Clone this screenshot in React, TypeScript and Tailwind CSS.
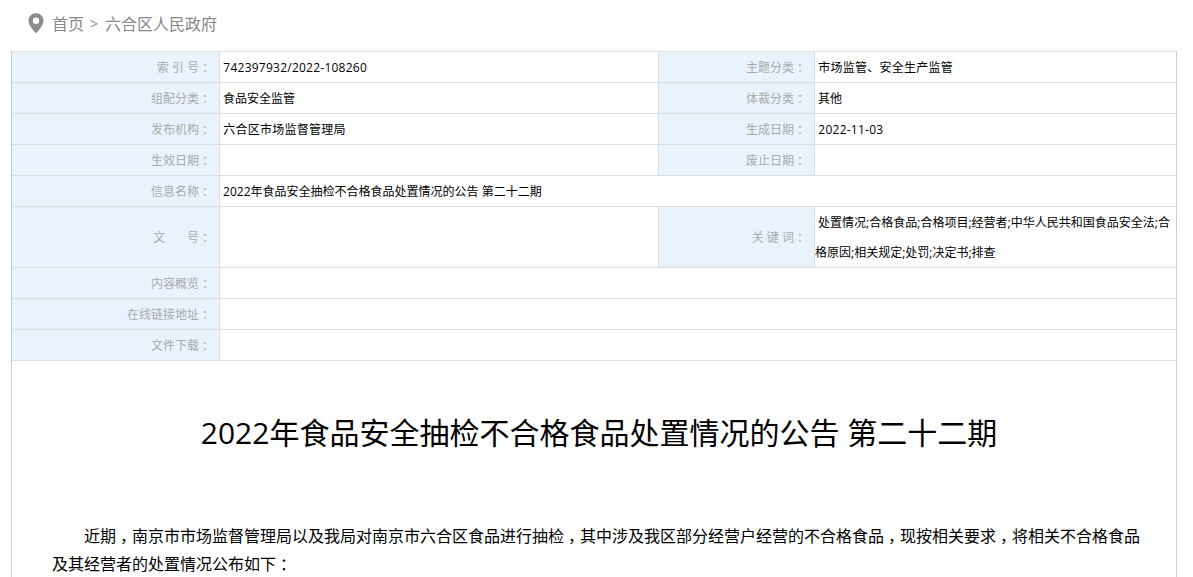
import { Fragment } from 'react'

const font = "font-['Open_Sans','Noto_Sans_CJK_SC',sans-serif]"

const labelCell = 'border-r border-b border-[#dddddd] bg-[#e8f3fd] pt-[2px] pr-[8px] text-right text-[#aaaaaa]'
const valueCell = 'border-b border-[#dddddd] pt-[2px] text-black'

// the reference font centres its full-width punctuation in the em box
function Punct({ text }: { text: string }) {
  return (
    <>
      {text.split(/(?<=[，：])|(?=[，：])/).map((part, i) =>
        part === '，' || part === '：' ? (
          <span key={i} className="inline-block w-[1em] text-center indent-0 [font-feature-settings:'halt']">{part}</span>
        ) : (
          <Fragment key={i}>{part}</Fragment>
        ),
      )}
    </>
  )
}

function Label({ text }: { text: string }) {
  return <td className={labelCell}><Punct text={text} /></td>
}

function Value({ text, digits }: { text?: string; digits?: boolean }) {
  if (!text) return null
  return <span className={digits ? 'tracking-[0.24px]' : ''}>{`\u00a0${text}`}</span>
}

function Row({ label, value }: { label: string; value?: string }) {
  return (
    <tr className="h-[31px]">
      <Label text={label} />
      <td colSpan={3} className={valueCell}><Value text={value} /></td>
    </tr>
  )
}

function DoubleRow({ a, b, c, d, digits }: { a: string; b?: string; c: string; d?: string; digits?: boolean }) {
  return (
    <tr className="h-[31px]">
      <Label text={a} />
      <td className={`${valueCell} border-r`}><Value text={b} digits={digits} /></td>
      <Label text={c} />
      <td className={valueCell}><Value text={d} digits={digits} /></td>
    </tr>
  )
}

export default function App() {
  return (
    <div className={`${font} h-[577px] w-[1193px] overflow-hidden bg-white`}>
      <div className="flex h-[51px] items-center pb-[4px] pl-[28px] text-base text-[#888888]">
        <PinIcon />
        <span className="ml-[8px]">首页</span>
        <span className="mr-[7px] ml-[6px] text-sm">&gt;</span>
        <span>六合区人民政府</span>
      </div>

      <div className="ml-[11px] w-[1166px] border-x border-[#cccccc]">
        <table className="w-full table-fixed border-separate border-spacing-0 border-t border-[#dddddd] text-xs">
          <colgroup>
            <col className="w-[208px]" />
            <col className="w-[439px]" />
            <col className="w-[156px]" />
            <col />
          </colgroup>
          <tbody>
            <DoubleRow a="索 引 号：" b="742397932/2022-108260" c="主题分类：" d="市场监管、安全生产监管" digits />
            <DoubleRow a="组配分类：" b="食品安全监管" c="体裁分类：" d="其他" />
            <DoubleRow a="发布机构：" b="六合区市场监督管理局" c="生成日期：" d="2022-11-03" digits />
            <DoubleRow a="生效日期：" c="废止日期：" />
            <Row label="信息名称：" value="2022年食品安全抽检不合格食品处置情况的公告 第二十二期" />
            <tr>
              <Label text={'文\u00a0\u00a0\u00a0\u00a0\u00a0\u00a0\u00a0号：'} />
              <td className={`${valueCell} border-r`}></td>
              <Label text="关 键 词：" />
              <td className="border-b border-[#dddddd] pt-px leading-[29.5px] text-black">
                &nbsp;处置情况;合格食品;合格项目;经营者;中华人民共和国食品安全法;合格原因;相关规定;处罚;决定书;排查
              </td>
            </tr>
            <Row label="内容概览：" />
            <Row label="在线链接地址：" />
            <Row label="文件下载：" />
          </tbody>
        </table>

        <div className="pr-[30px] pl-10">
          <h1 className="pt-[52px] text-center text-[30px] leading-[40px] font-normal text-black">
            2022年食品安全抽检不合格食品处置情况的公告 第二十二期
          </h1>
          <p className="mt-[69px] indent-8 text-base leading-[28px] text-black">
            <Punct text="近期，南京市市场监督管理局以及我局对南京市六合区食品进行抽检，其中涉及我区部分经营户经营的不合格食品，现按相关要求，将相关不合格食品及其经营者的处置情况公布如下：" />
          </p>
        </div>
      </div>
    </div>
  )
}

function PinIcon() {
  return (
    <svg width="16" height="21" viewBox="0 0 17 22" className="shrink-0">
      <path
        fillRule="evenodd"
        fill="#8c8c8c"
        d="M8.5 0C3.8 0 0.5 3.4 0.5 7.9 0.5 12.5 5.5 18.5 8.5 21.5 11.5 18.5 16.5 12.5 16.5 7.9 16.5 3.4 13.2 0 8.5 0ZM8.5 4.6A3.4 3.4 0 1 1 8.5 11.4 3.4 3.4 0 1 1 8.5 4.6Z"
      />
    </svg>
  )
}
